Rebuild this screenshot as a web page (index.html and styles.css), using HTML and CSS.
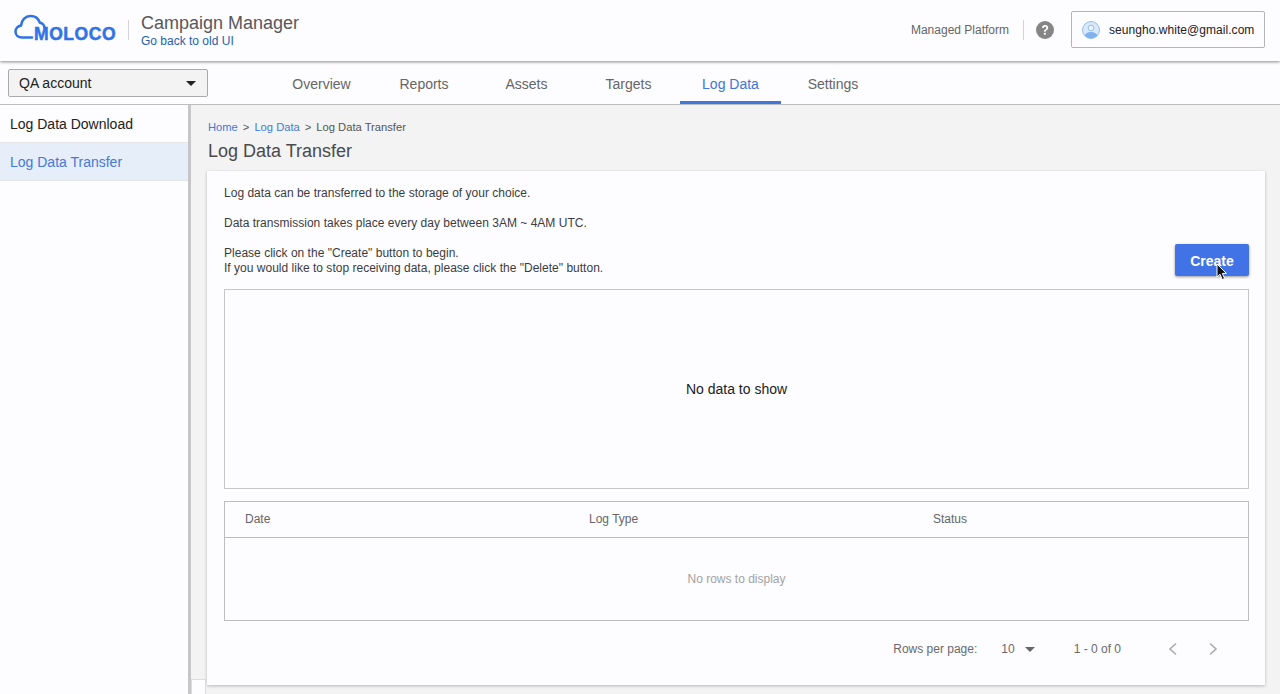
FILE: index.html
```html
<!DOCTYPE html>
<html lang="en">
<head>
<meta charset="utf-8">
<title>Log Data Transfer</title>
<link rel="stylesheet" href="styles.css">
</head>
<body>
<header class="topbar">
  <div class="logo">
    <svg class="cloud" width="32" height="26" viewBox="0 0 32 26" fill="none" stroke="#2f73e6" stroke-width="2.6" stroke-linecap="round" stroke-linejoin="round"><path d="M18 23.5H8C4 23.5 1.5 20.8 1.5 17.5C1.5 14.5 3.8 12 7 11.6C7.6 6 11.5 2 16.5 2C21 2 24.5 4.8 25.8 8.6C28.5 9 30.5 11.5 30.5 14"/></svg>
    <span class="logo-text">MOLOCO</span>
  </div>
  <div class="divider tall"></div>
  <div class="product">
    <div class="product-name">Campaign Manager</div>
    <a class="old-ui">Go back to old UI</a>
  </div>
  <div class="top-right">
    <span class="platform">Managed Platform</span>
    <div class="divider"></div>
    <svg class="help" width="18" height="18" viewBox="0 0 18 18"><circle cx="9" cy="9" r="9" fill="#858585"/><path d="M6 7.1C6 5.2 7.3 4.1 9.1 4.1C10.9 4.1 12.2 5.2 12.2 6.8C12.2 8 11.5 8.6 10.6 9.2C9.9 9.7 9.7 10 9.7 10.8H8C8 9.5 8.4 8.9 9.4 8.2C10.1 7.7 10.4 7.4 10.4 6.9C10.4 6.2 9.9 5.7 9.1 5.7C8.3 5.7 7.8 6.3 7.7 7.1Z" fill="#fff"/><rect x="7.9" y="11.8" width="1.9" height="1.9" fill="#fff"/></svg>
    <div class="user">
      <svg width="18" height="18" viewBox="0 0 18 18"><defs><clipPath id="c"><circle cx="9" cy="9" r="8.5"/></clipPath></defs><circle cx="9" cy="9" r="8.5" fill="#d9e8fb"/><g clip-path="url(#c)"><ellipse cx="9" cy="15.5" rx="6.5" ry="4.5" fill="#7fb2ee"/></g><circle cx="9" cy="7" r="2.8" fill="#eef5fd" stroke="#7fb2ee" stroke-width=".8"/><circle cx="9" cy="9" r="8.5" fill="none" stroke="#7fb2ee" stroke-width=".8"/></svg>
      <span>seungho.white@gmail.com</span>
    </div>
  </div>
</header>

<div class="navbar">
  <div class="account"><span>QA account</span><i class="caret"></i></div>
  <nav class="tabs">
    <a class="tab t1">Overview</a>
    <a class="tab t2">Reports</a>
    <a class="tab t3">Assets</a>
    <a class="tab t4">Targets</a>
    <a class="tab active t5">Log Data</a>
    <a class="tab t6">Settings</a>
  </nav>
</div>

<div class="body">
  <aside class="sidebar">
    <a class="side-item">Log Data Download</a>
    <a class="side-item selected">Log Data Transfer</a>
  </aside>
  <div class="splitter"><div class="handle"></div></div>
  <main class="main">
    <div class="crumbs"><a>Home</a><b>&gt;</b><a>Log Data</a><b>&gt;</b><span>Log Data Transfer</span></div>
    <h1 class="title">Log Data Transfer</h1>
    <section class="card">
      <div class="intro">
        <div class="copy">
          <p>Log data can be transferred to the storage of your choice.</p>
          <p>Data transmission takes place every day between 3AM ~ 4AM UTC.</p>
          <p class="last">Please click on the "Create" button to begin.<br>If you would like to stop receiving data, please click the "Delete" button.</p>
        </div>
        <button class="create">Create</button>
      </div>
      <div class="empty">No data to show</div>
      <div class="table">
        <div class="thead">
          <span class="c1">Date</span>
          <span class="c2">Log Type</span>
          <span class="c3">Status</span>
        </div>
        <div class="tbody">No rows to display</div>
      </div>
      <div class="pager">
        <span class="rows-label">Rows per page:</span>
        <span class="rows-val">10</span>
        <i class="caret small"></i>
        <span class="range">1 - 0 of 0</span>
        <svg class="arrow first" width="10" height="14" viewBox="0 0 10 14" fill="none" stroke="#ababab" stroke-width="1.6"><path d="M8 1.5L2 7L8 12.5"/></svg>
        <svg class="arrow" width="10" height="14" viewBox="0 0 10 14" fill="none" stroke="#ababab" stroke-width="1.6"><path d="M2 1.5L8 7L2 12.5"/></svg>
      </div>
    </section>
  </main>
</div>
<svg class="cursor" width="12" height="18" viewBox="0 0 12 18"><path d="M1 1V14L4 11.2L6.3 16.5L8.6 15.5L6.3 10.4H10.4Z" fill="#111" stroke="#fff" stroke-width="1"/></svg>
</body>
</html>
```
FILE: styles.css
```css
* { box-sizing: border-box; }
html, body { height: 100%; }
body {
  margin: 0;
  height: 694px;
  overflow: hidden;
  background: #fdfcfe;
  font-family: "Liberation Sans", Arial, sans-serif;
  color: #333;
  display: flex;
  flex-direction: column;
  position: relative;
}
a { cursor: pointer; }

/* top bar */
.topbar {
  height: 61px;
  flex: none;
  display: flex;
  align-items: center;
  padding: 0 15px 2px 14px;
  background: #fdfcfe;
  box-shadow: 0 1px 3px rgba(0,0,0,.45);
  position: relative;
  z-index: 2;
}
.logo {
  display: flex;
  align-items: flex-start;
  align-self: flex-start;
  width: 102px;
  height: 28px;
  margin: 14px 12px 0 0;
}
.cloud { flex: none; margin-right: -12px; }
.logo-text {
  font-size: 17.5px;
  font-weight: 700;
  letter-spacing: .55px;
  -webkit-text-stroke: .5px #2f73e6;
  color: #2f73e6;
  line-height: 17px;
  margin-top: 12px;
  white-space: nowrap;
}
.divider { width: 1px; height: 20px; background: #d4d4d6; flex: none; }
.divider.tall { margin-right: 12px; }
.product { display: flex; flex-direction: column; }
.product-name { font-size: 18px; line-height: 21px; color: #58585a; margin-top: 2px; }
.old-ui { font-size: 12px; line-height: 14px; color: #1d62ad; }
.top-right { margin-left: auto; display: flex; align-items: center; }
.platform { font-size: 12px; color: #666; margin-right: 14px; }
.help { margin: 0 16px 0 13px; position: relative; left: -1px; }
.user {
  width: 194px;
  height: 37px;
  border: 1px solid #b4b4b8;
  border-radius: 2px;
  display: flex;
  align-items: center;
  gap: 9px;
  padding-left: 10px;
  font-size: 12px;
  color: #222;
  letter-spacing: .05px;
}

/* nav */
.navbar {
  height: 44px;
  flex: none;
  display: flex;
  align-items: flex-start;
  border-bottom: 1px solid #bdbdc0;
  padding: 8px 0 0 8px;
  position: relative;
  background: #fdfcfe;
}
.account {
  width: 200px;
  height: 28px;
  border: 1px solid #a9a9ab;
  border-radius: 2px;
  background: #f3f3f3;
  display: flex;
  align-items: center;
  justify-content: space-between;
  padding: 0 11px 0 10px;
  font-size: 14px;
  color: #222;
}
.caret {
  display: block;
  width: 0; height: 0;
  border-left: 5px solid transparent;
  border-right: 5px solid transparent;
  border-top: 5px solid #222;
}
.caret.small { border-top-color: #666; margin-left: 10px; }
.tabs { display: flex; margin-left: 61px; margin-top: -8px; height: 43px; }
.tab {
  font-size: 14px;
  color: #666;
  display: flex;
  align-items: center;
  justify-content: center;
  height: 43px;
  border-bottom: 3px solid transparent;
  padding-top: 6px;
}
.t1 { width: 105px; }
.t2 { width: 100px; }
.t3 { width: 105px; }
.t4 { width: 99px; }
.t5 { width: 101px; margin-left: 2px; }
.t6 { width: 104px; }
.tab.active { color: #3e76dc; border-bottom-color: #3e76dc; }

/* body */
.body { flex: 1; display: flex; min-height: 0; }
.sidebar { width: 188px; flex: none; background: #fdfcfe; }
.side-item {
  display: flex;
  align-items: center;
  height: 38px;
  padding-left: 10px;
  font-size: 14px;
  color: #222;
  border-bottom: 1px solid #e6e6e8;
}
.side-item.selected { background: #e6eef9; color: #4479d8; }
.splitter {
  width: 3px;
  flex: none;
  background: #c6c6c8;
  position: relative;
}
.handle {
  position: absolute;
  left: 3px;
  top: 574px;
  width: 15px;
  height: 20px;
  background: #fdfcfe;
  border: 1px solid #dcdcde;
  z-index: 1;
}
.main {
  flex: 1;
  min-width: 0;
  background: #f3f3f4;
  padding: 15px 15px 0 16px;
}
.crumbs { display: flex; align-items: center; padding-left: 1px; font-size: 11.2px; line-height: 14px; color: #555; }
.crumbs a { color: #4479d8; }
.crumbs b { font-weight: 400; margin: 0 5px; }
.title { margin: 6px 0 9px; padding-left: 1px; font-size: 18px; line-height: 22px; font-weight: 400; color: #4a4a4c; }
.card {
  height: 514px;
  background: #fdfcfe;
  box-shadow: 0 1px 3px rgba(0,0,0,.25);
  padding: 15px 16px 0 17px;
}
.intro { display: flex; justify-content: space-between; align-items: flex-end; height: 103px; }
.copy { align-self: flex-start; font-size: 12px; line-height: 15px; color: #3c3c3e; letter-spacing: .015px; }
.copy p { margin: 0 0 15px; }
.copy p.last { margin: 0; }
.create {
  width: 74px;
  height: 32px;
  border: 0;
  border-radius: 2px;
  background: #4273e6;
  color: #fff;
  font: 700 14px "Liberation Sans", Arial, sans-serif;
  box-shadow: 0 1px 3px rgba(0,0,0,.4);
  padding: 2px 0 0;
  margin-bottom: 13px;
}
.empty {
  height: 200px;
  border: 1px solid #c6c6c8;
  display: flex;
  align-items: center;
  justify-content: center;
  font-size: 14px;
  color: #222;
}
.table { margin-top: 12px; height: 120px; border: 1px solid #bdbdc0; }
.thead {
  height: 36px;
  display: flex;
  align-items: center;
  padding-bottom: 2px;
  border-bottom: 1px solid #bdbdc0;
  font-size: 12px;
  color: #666;
}
.c1 { width: 364px; padding-left: 20px; }
.c2 { width: 344px; }
.tbody {
  height: 82px;
  display: flex;
  align-items: center;
  justify-content: center;
  font-size: 12px;
  color: #a3a3a5;
}
.pager {
  display: flex;
  align-items: center;
  justify-content: flex-end;
  height: 56px;
  font-size: 12px;
  color: #6a6a6c;
}
.rows-val { margin-left: 24px; }
.range { margin-left: 39px; }
.arrow { display: block; margin-left: 30px; }
.arrow.first { margin-left: 47px; }
.arrow:last-child { margin-right: 31px; }

/* pointer over the button */
.cursor { position: absolute; left: 1216px; top: 263px; z-index: 3; }
```
